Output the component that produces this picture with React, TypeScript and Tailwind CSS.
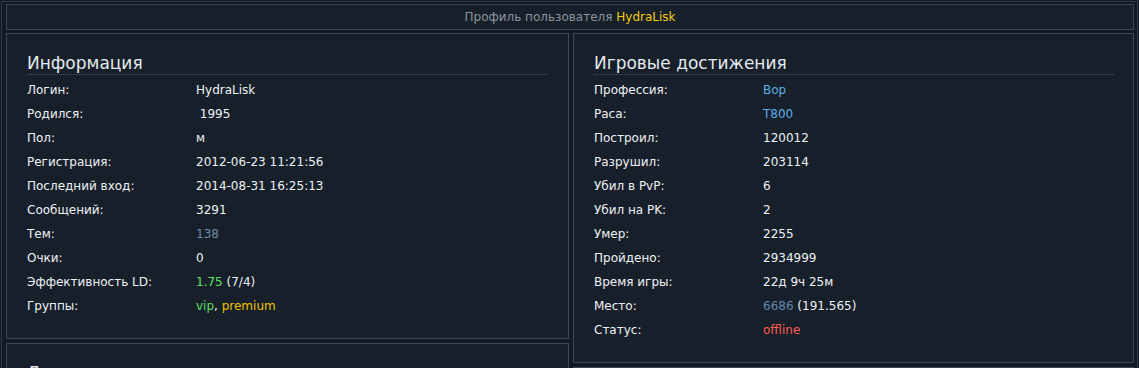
type Row = { label: string; value: React.ReactNode };

const info: Row[] = [
  { label: 'Логин:', value: 'HydraLisk' },
  { label: 'Родился:', value: '\u00a01995' },
  { label: 'Пол:', value: 'м' },
  { label: 'Регистрация:', value: '2012-06-23 11:21:56' },
  { label: 'Последний вход:', value: '2014-08-31 16:25:13' },
  { label: 'Сообщений:', value: '3291' },
  { label: 'Тем:', value: <span className="text-[#6f8ea6]">138</span> },
  { label: 'Очки:', value: '0' },
  {
    label: 'Эффективность LD:',
    value: (
      <>
        <span className="text-[#66e066]">1.75</span> (7/4)
      </>
    ),
  },
  {
    label: 'Группы:',
    value: (
      <>
        <span className="text-[#5fdc5f]">vip</span>, <span className="text-[#f0c000]">premium</span>
      </>
    ),
  },
];

const game: Row[] = [
  { label: 'Профессия:', value: <span className="text-[#5ab0e6]">Вор</span> },
  { label: 'Раса:', value: <span className="text-[#5ab0e6]">T800</span> },
  { label: 'Построил:', value: '120012' },
  { label: 'Разрушил:', value: '203114' },
  { label: 'Убил в PvP:', value: '6' },
  { label: 'Убил на PK:', value: '2' },
  { label: 'Умер:', value: '2255' },
  { label: 'Пройдено:', value: '2934999' },
  { label: 'Время игры:', value: '22д 9ч 25м' },
  {
    label: 'Место:',
    value: (
      <>
        <span className="text-[#5f87ad]">6686</span> (191.565)
      </>
    ),
  },
  { label: 'Статус:', value: <span className="text-[#ff5a4e]">offline</span> },
];

const Panel = ({ title, rows }: { title: string; rows: Row[] }) => (
  <div className="border border-[#3a4855] bg-[#17202a] px-[20px] pt-[19px] pb-[20px]">
    <h2 className="text-[17px] leading-[20px] text-[#e4e9ee] border-b border-dotted border-[#4b5967] pb-px">
      {title}
    </h2>
    <div className="mt-[3px]">
      {rows.map((r) => (
        <div key={r.label} className="flex h-[24px] items-center text-[12px] text-[#eef1f4]">
          <span className="w-[169px] shrink-0">{r.label}</span>
          <span>{r.value}</span>
        </div>
      ))}
    </div>
  </div>
);

export default function App() {
  return (
    <div className="w-[1139px] h-[368px] overflow-hidden bg-[#121a23] pl-px pt-px font-['DejaVu_Sans',sans-serif]">
      <div className="h-[400px] w-[1137px] border-l border-t border-r border-[#2e3b47] pl-[4px] pr-[3px] pt-[2px]">
        <div className="h-[26px] border border-[#3a4855] bg-[#17202a] flex items-center justify-center text-[12px] text-[#8c939b]">
          Профиль пользователя&nbsp;<span className="text-[#f2cb0c]">HydraLisk</span>
        </div>
        <div className="grid grid-cols-[563px_561px] gap-[4px] mt-[3px] items-start">
          <div className="flex flex-col gap-[4px]">
            <Panel title="Информация" rows={info} />
            <div className="border border-[#3a4855] bg-[#17202a] px-[20px] pt-[19px] h-[80px]">
              <h2 className="text-[17px] leading-[20px] text-[#e4e9ee]">Достижения</h2>
            </div>
          </div>
          <div className="flex flex-col gap-[4px]">
            <Panel title="Игровые достижения" rows={game} />
            <div className="border border-[#3a4855] bg-[#17202a] h-[80px]" />
          </div>
        </div>
      </div>
    </div>
  );
}
